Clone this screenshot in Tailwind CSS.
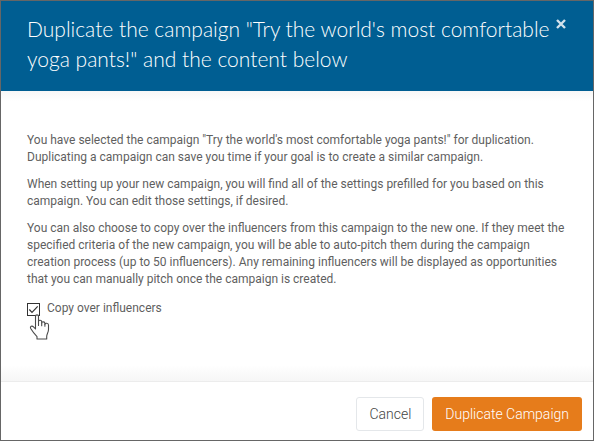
<!DOCTYPE html>
<html lang="en">
<head>
<meta charset="utf-8">
<meta name="viewport" content="width=device-width, initial-scale=1">
<title>Duplicate campaign</title>
<script src="https://cdn.jsdelivr.net/npm/@tailwindcss/browser@4"></script>
</head>
<body class="bg-white font-['Roboto',sans-serif] text-[12px] leading-[17px] text-[#5f5f5f]">
<main role="dialog" aria-labelledby="title" class="flex min-h-screen flex-col border border-[#666]">
  <header class="flex items-start bg-[#005e92] pt-[13px] pr-[26px] pb-[17px] pl-[26px] text-white">
    <h1 id="title" class="flex-1 font-['Lato',sans-serif] text-[21px] leading-[30px] font-light">Duplicate the campaign "Try the world's most comfortable yoga pants!" and the content below</h1>
    <button type="button" aria-label="Close" class="mt-1 -ml-2 flex size-3 items-center justify-center text-[#d3e2ec]">
      <svg class="size-[10px]" viewBox="0 0 10 10" fill="none" stroke="currentColor" stroke-width="2.4"><path d="M1 1l8 8M9 1L1 9"/></svg>
    </button>
  </header>
  <section class="flex-1 bg-[linear-gradient(#f7f7f7,#fff_10px,#fff_calc(100%-16px),#f6f6f6)] px-[26px] pt-[41px]">
    <div class="flex flex-col gap-[10px]">
      <p>You have selected the campaign "Try the world's most comfortable yoga pants!" for duplication. Duplicating a campaign can save you time if your goal is to create a similar campaign.</p>
      <p>When setting up your new campaign, you will find all of the settings prefilled for you based on this campaign. You can edit those settings, if desired.</p>
      <p>You can also choose to copy over the influencers from this campaign to the new one. If they meet the specified criteria of the new campaign, you will be able to auto-pitch them during the campaign creation process (up to 50 influencers). Any remaining influencers will be displayed as opportunities that you can manually pitch once the campaign is created.</p>
    </div>
    <div class="relative mt-3 flex items-center gap-[7px]">
      <span class="relative mt-[2px] size-[13px]">
        <input id="copy" type="checkbox" checked class="block size-[13px] appearance-none border border-[#333] bg-white">
        <svg class="pointer-events-none absolute inset-0 size-[13px]" viewBox="0 0 13 13" fill="none" stroke="#333" stroke-width="1.2"><path d="M2.3 6.5l2.7 2.8 5.7-6"/></svg>
      </span>
      <label for="copy">Copy over influencers</label>
      <svg class="pointer-events-none absolute top-[14px] left-[2px] h-[26px] w-[22px]" viewBox="0 0 22 26" fill="#fff" stroke="#4a4a4a" stroke-width="1.1" stroke-linejoin="round" stroke-linecap="round"><path d="M6.500 15V2.500C6.500.3 9.500.3 9.500 2.500V8.500V7.500c0-1.700 3.200-1.700 3.200.2V9c0-1.700 3.200-1.500 3.200.3v1c0-1.500 3.600-1.300 3.600.6v4.500c0 3-1.800 4.500-1.800 7V25H8v-2.400C6 20.500 3.500 17.500 1.700 14.500.6 12.500 3 11.300 4.500 12.800z"/><path d="M9.500 8.500v3M12.700 9v2.800M15.900 10v2.200" fill="none"/></svg>
    </div>
  </section>
  <footer class="flex justify-end gap-2 border-t border-[#ececec] px-[11px] pt-[15px] pb-[9px] text-[14px] font-light">
    <button type="button" class="h-[34px] rounded-[3px] border border-[#e4e7ea] bg-white px-3 text-[#444]">Cancel</button>
    <button type="button" class="h-[34px] rounded-[3px] bg-[#e67c1b] px-[13px] text-white">Duplicate Campaign</button>
  </footer>
</main>
</body>
</html>
